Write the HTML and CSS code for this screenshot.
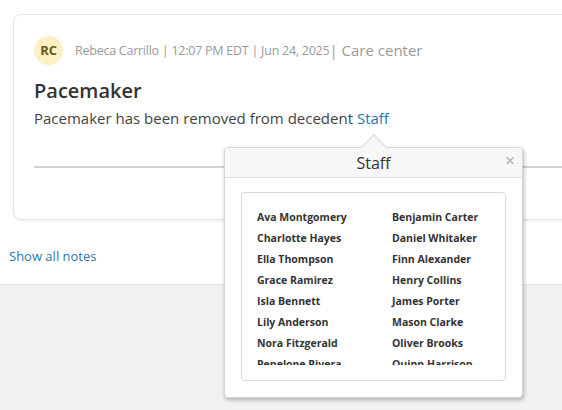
FILE: index.html
```html
<!DOCTYPE html>
<html lang="en">
<head>
<meta charset="utf-8">
<title>Notes</title>
<link rel="stylesheet" href="styles.css">
</head>
<body>
<div class="page">
  <section class="notes">
    <article class="card">
      <header class="meta">
        <span class="avatar">RC</span>
        <span class="meta-text">Rebeca Carrillo | 12:07 PM EDT | Jun 24, 2025</span><span class="meta-place">| Care center</span>
      </header>
      <h2 class="title">Pacemaker</h2>
      <p class="body">Pacemaker has been removed from decedent <a class="link" href="#">Staff</a></p>
      <div class="divider"></div>
    </article>
    <a class="show-all" href="#">Show all notes</a>
  </section>
  <footer class="footer"></footer>

  <div class="popover">
    <span class="arrow"></span>
    <div class="pop-head">
      <span class="pop-title">Staff</span>
      <span class="close">&#x2715;</span>
    </div>
    <div class="pop-body">
      <div class="list-box">
        <ul class="list">
          <li>Ava Montgomery</li><li>Benjamin Carter</li>
          <li>Charlotte Hayes</li><li>Daniel Whitaker</li>
          <li>Ella Thompson</li><li>Finn Alexander</li>
          <li>Grace Ramirez</li><li>Henry Collins</li>
          <li>Isla Bennett</li><li>James Porter</li>
          <li>Lily Anderson</li><li>Mason Clarke</li>
          <li>Nora Fitzgerald</li><li>Oliver Brooks</li>
          <li>Penelope Rivera</li><li>Quinn Harrison</li>
        </ul>
      </div>
    </div>
  </div>
</div>
</body>
</html>
```
FILE: styles.css
```css
html, body {
  margin: 0;
  padding: 0;
}
body {
  width: 562px;
  height: 410px;
  overflow: hidden;
  background: #ffffff;
  font-family: "Open Sans", "Liberation Sans", sans-serif;
  color: #333;
}
.page {
  position: relative;
  height: 410px;
  display: flex;
  flex-direction: column;
}
.notes {
  height: 284px;
  box-sizing: border-box;
  padding-top: 14px;
  display: flex;
  flex-direction: column;
}
.card {
  margin-left: 13px;
  width: 620px;
  height: 206px;
  box-sizing: border-box;
  border: 1px solid #e4e4e4;
  border-radius: 8px;
  box-shadow: 0 1px 3px rgba(0,0,0,0.08);
  padding: 20px 0 0 20px;
  background: #fff;
}
.meta {
  display: flex;
  align-items: center;
  height: 30px;
}
.avatar {
  width: 29px;
  height: 29px;
  border-radius: 50%;
  background: #fbf1c4;
  color: #6a5716;
  font-weight: 700;
  font-size: 13px;
  display: flex;
  align-items: center;
  justify-content: center;
  margin-right: 12px;
  letter-spacing: -0.3px;
}
.meta-text {
  font-size: 12.5px;
  color: #9a9a9a;
  letter-spacing: -0.25px;
}
.meta-place {
  font-size: 15px;
  color: #9a9a9a;
}
.title {
  margin: 12px 0 0 0;
  font-size: 20px;
  font-weight: 600;
  line-height: 28px;
  color: #333;
}
.body {
  margin: 2px 0 0 0;
  font-size: 15px;
  line-height: 22px;
  color: #444;
}
.link {
  color: #2a78ad;
  text-decoration: none;
}
.divider {
  margin-top: 37px;
  height: 2px;
  background: #d2d2d2;
}
.show-all {
  margin: 27px 0 0 9px;
  font-size: 13px;
  line-height: 18px;
  color: #2a78ad;
  text-decoration: none;
  align-self: flex-start;
}
.footer {
  flex: 1;
  background: #f1f1f1;
  border-top: 1px solid #e2e2e2;
}
.popover {
  position: absolute;
  left: 224px;
  top: 147px;
  width: 299px;
  height: 251px;
  box-sizing: border-box;
  background: #fff;
  border: 1px solid #d6d6d6;
  border-radius: 4px;
  box-shadow: 1px 2px 4px rgba(0,0,0,0.28);
  display: flex;
  flex-direction: column;
}
.arrow {
  position: absolute;
  left: 140px;
  top: -10px;
  width: 17px;
  height: 17px;
  background: #f7f7f7;
  border-top: 1px solid #d6d6d6;
  border-left: 1px solid #d6d6d6;
  transform: rotate(45deg);
}
.pop-head {
  position: relative;
  height: 32px;
  background: #f7f7f7;
  border-bottom: 1px solid #e0e0e0;
  border-radius: 4px 4px 0 0;
  display: flex;
  align-items: center;
  justify-content: center;
}
.pop-title {
  position: relative;
  font-size: 16px;
  color: #333;
  margin-top: 1px;
}
.close {
  position: absolute;
  right: 7px;
  top: 4px;
  font-size: 12px;
  font-weight: 700;
  color: #bdbdbd;
}
.pop-body {
  padding: 14px 16px 16px 16px;
  flex: 1;
  display: flex;
}
.list-box {
  flex: 1;
  border: 1px solid #dadada;
  border-radius: 4px;
  padding: 14px 0 15px 15px;
}
.list {
  margin: 0;
  padding: 0;
  list-style: none;
  display: grid;
  grid-template-columns: 135px 1fr;
  grid-auto-rows: 21px;
  height: 158px;
  overflow: hidden;
}
.list li {
  font-size: 10.5px;
  font-weight: 700;
  line-height: 21px;
  color: #333;
  white-space: nowrap;
}
```
